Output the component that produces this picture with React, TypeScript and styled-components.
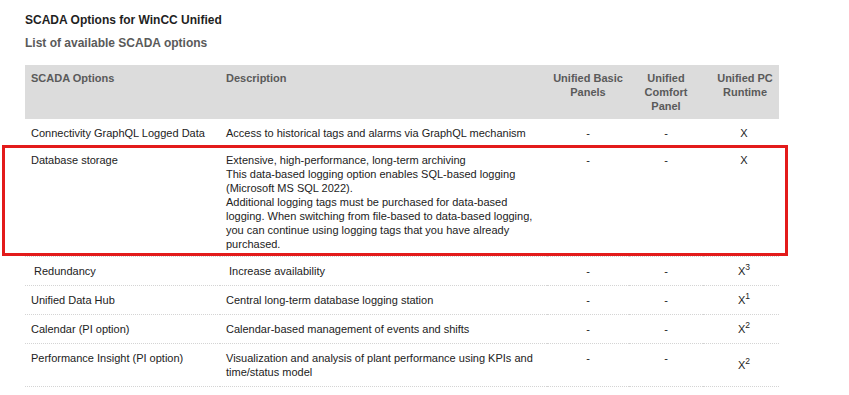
import React from "react";
import {createGlobalStyle, styled} from "styled-components";

const GlobalStyle = createGlobalStyle`
  body {
    margin: 0;
    background: #ffffff;
    font-family: "Liberation Sans", Arial, sans-serif;
  }
`

const Page = styled.main`
  padding: 12px 0 0 25px;
`

const Title = styled.h2`
  margin: 0;
  font-size: 12px;
  line-height: 16px;
  font-weight: 700;
  color: #1f1f1f;
`

const Subtitle = styled.h3`
  margin: 7px 0 0;
  font-size: 12px;
  line-height: 16px;
  font-weight: 700;
  color: #5a5a5a;
`

const Table = styled.table`
  margin-top: 14px;
  width: 754px;
  border-collapse: collapse;
  table-layout: fixed;
  font-size: 11px;
  line-height: 14px;
`

const HeadCell = styled.th<{ $center?: boolean, $shift?: boolean }>`
  background: #dcdcdc;
  color: #5a5a5a;
  font-weight: 700;
  text-align: ${p => p.$center ? "center" : "left"};
  vertical-align: top;
  padding: 6px ${p => p.$shift ? "3px" : "6px"} 6px ${p => p.$shift ? "11px" : "6px"};
`

const Row = styled.tr`
  border-bottom: 1px dotted #d4d4d4;
`

const Cell = styled.td<{
    $center?: boolean,
    $middle?: boolean,
    $indent?: boolean,
    $shift?: boolean,
    $tight?: boolean
}>`
  position: relative;
  color: #222222;
  text-align: ${p => p.$center ? "center" : "left"};
  vertical-align: ${p => p.$middle ? "middle" : "top"};
  padding: ${p => p.$tight ? "5px" : "7px"} ${p => p.$shift ? "4px" : "6px"} ${p => p.$tight ? "5px" : "7px"} ${p => p.$indent ? "9px" : p.$shift ? "10px" : "6px"};
`

const Sup = styled.sup`
  font-size: 8.5px;
  line-height: 0;
  vertical-align: 5px;
`

const Highlight = styled.div`
  position: absolute;
  left: -23px;
  top: -3px;
  bottom: 0;
  width: 786px;
  box-sizing: border-box;
  border: 3px solid #e31b1b;
  pointer-events: none;
`

type Option = {
    name: string,
    description: string[],
    basic: string,
    comfort: string,
    pc: string,
    note?: string,
    highlighted?: boolean,
    indent?: boolean,
    middle?: boolean
}

const options: Option[] = [
    {
        name: "Connectivity GraphQL Logged Data",
        description: ["Access to historical tags and alarms via GraphQL mechanism"],
        basic: "-", comfort: "-", pc: "X"
    },
    {
        name: "Database storage",
        description: [
            "Extensive, high-performance, long-term archiving",
            "This data-based logging option enables SQL-based logging (Microsoft MS SQL 2022).",
            "Additional logging tags must be purchased for data-based logging. When switching from file-based to data-based logging, you can continue using logging tags that you have already purchased."
        ],
        basic: "-", comfort: "-", pc: "X",
        highlighted: true
    },
    {
        name: "Redundancy",
        description: ["Increase availability"],
        basic: "-", comfort: "-", pc: "X", note: "3",
        indent: true
    },
    {
        name: "Unified Data Hub",
        description: ["Central long-term database logging station"],
        basic: "-", comfort: "-", pc: "X", note: "1"
    },
    {
        name: "Calendar (PI option)",
        description: ["Calendar-based management of events and shifts"],
        basic: "-", comfort: "-", pc: "X", note: "2"
    },
    {
        name: "Performance Insight (PI option)",
        description: ["Visualization and analysis of plant performance using KPIs and time/status model"],
        basic: "-", comfort: "-", pc: "X", note: "2",
        middle: true
    }
]

export default function App(): JSX.Element {
    return (
        <>
            <GlobalStyle/>
            <Page>
                <Title>SCADA Options for WinCC Unified</Title>
                <Subtitle>List of available SCADA options</Subtitle>
                <Table>
                    <colgroup>
                        <col style={{width: 195}}/>
                        <col style={{width: 327}}/>
                        <col style={{width: 82}}/>
                        <col style={{width: 74}}/>
                        <col style={{width: 76}}/>
                    </colgroup>
                    <thead>
                    <tr>
                        <HeadCell>SCADA Options</HeadCell>
                        <HeadCell>Description</HeadCell>
                        <HeadCell $center>Unified Basic Panels</HeadCell>
                        <HeadCell $center>Unified Comfort Panel</HeadCell>
                        <HeadCell $center $shift>Unified PC Runtime</HeadCell>
                    </tr>
                    </thead>
                    <tbody>
                    {options.map(option => (
                        <Row key={option.name}>
                            <Cell $indent={option.indent} $tight={option.highlighted}>
                                {option.highlighted && <Highlight/>}
                                {option.name}
                            </Cell>
                            <Cell $indent={option.indent} $tight={option.highlighted}>
                                {option.description.map((line, i) => (
                                    <div key={i}>{line}</div>
                                ))}
                            </Cell>
                            <Cell $center $tight={option.highlighted}>{option.basic}</Cell>
                            <Cell $center $tight={option.highlighted}>{option.comfort}</Cell>
                            <Cell $center $shift $middle={option.middle} $tight={option.highlighted}>
                                {option.pc}
                                {option.note && <Sup>{option.note}</Sup>}
                            </Cell>
                        </Row>
                    ))}
                    </tbody>
                </Table>
            </Page>
        </>
    );
}
